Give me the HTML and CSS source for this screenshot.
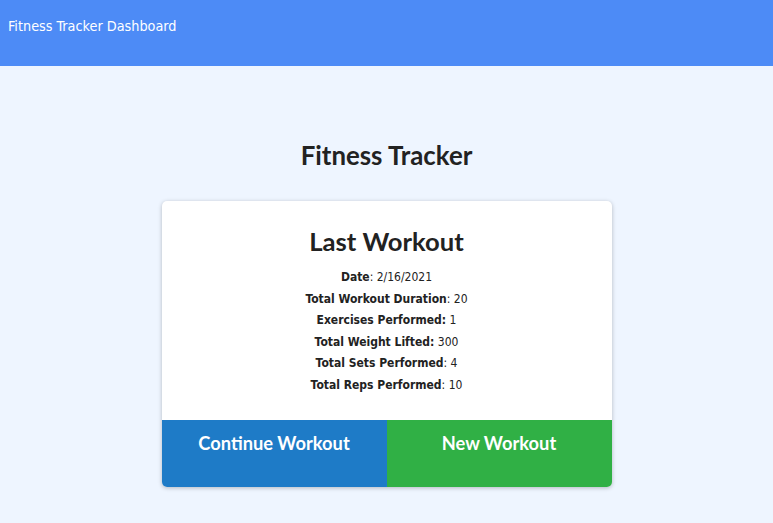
FILE: index.html
```html
<!DOCTYPE html>
<html>
<head>
<meta charset="utf-8">
<link rel="stylesheet" href="styles.css">
</head>
<body>
<header class="topbar">
  <span class="brand">Fitness Tracker Dashboard</span>
</header>
<main class="content">
  <h1 class="title">Fitness Tracker</h1>
  <section class="card">
    <div class="card-body">
      <h2 class="card-title">Last Workout</h2>
      <p class="stat"><strong>Date</strong>: 2/16/2021</p>
      <p class="stat"><strong>Total Workout Duration</strong>: 20</p>
      <p class="stat"><strong>Exercises Performed:</strong> 1</p>
      <p class="stat"><strong>Total Weight Lifted:</strong> 300</p>
      <p class="stat"><strong>Total Sets Performed</strong>: 4</p>
      <p class="stat"><strong>Total Reps Performed</strong>: 10</p>
    </div>
    <div class="actions">
      <button class="btn btn-continue">Continue Workout</button>
      <button class="btn btn-new">New Workout</button>
    </div>
  </section>
</main>
</body>
</html>
```
FILE: styles.css
```css
* { box-sizing: border-box; }
html, body { margin: 0; padding: 0; }
body {
  background: #eef5ff;
  font-family: "DejaVu Sans Condensed", "DejaVu Sans", Verdana, sans-serif;
  color: #222;
  height: 523px;
  overflow: hidden;
}
.topbar {
  background: #4d8bf6;
  height: 66px;
  padding: 16px 8px 0;
}
.brand {
  color: #fff;
  font-size: 14.3px;
  font-family: "DejaVu Sans Condensed", "DejaVu Sans", sans-serif;
}
.content {
  display: flex;
  flex-direction: column;
  align-items: center;
}
.title {
  font-family: Lato, sans-serif;
  font-weight: 700;
  font-size: 25.8px;
  margin: 74px 0 0;
  line-height: 30px;
  color: #222;
}
.card {
  margin-top: 31px;
  width: 450px;
  background: #fff;
  border-radius: 5px;
  box-shadow: 0 1px 4px rgba(0,0,0,0.25);
  overflow: hidden;
}
.card-body {
  padding: 25px 10px 23px;
  text-align: center;
}
.card-title {
  font-family: Lato, sans-serif;
  font-weight: 700;
  font-size: 25.6px;
  line-height: 30px;
  margin: 0 0 11px;
  color: #222;
}
.stat {
  margin: 0;
  font-size: 12px;
  line-height: 21.6px;
  color: #222;
}
.stat strong { font-weight: 700; }
.actions {
  display: flex;
  height: 67px;
}
.btn {
  flex: 1;
  border: 0;
  margin: 0;
  color: #fff;
  font-family: Lato, sans-serif;
  font-weight: 700;
  font-size: 18.3px;
  padding: 12px 0 0;
  display: flex;
  justify-content: center;
  align-items: flex-start;
}
.btn-continue { background: #1e7bc7; }
.btn-new { background: #30b045; }
```
